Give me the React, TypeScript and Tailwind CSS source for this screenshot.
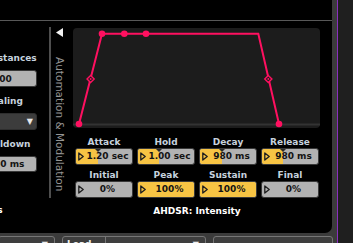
import React from 'react';

const font = { fontFamily: '"DejaVu Sans", Verdana, sans-serif' };

type Param = { label: string; value: string; fill: number };

const rows: Param[][] = [
  [
    { label: 'Attack', value: '1.20 sec', fill: 40 },
    { label: 'Hold', value: '1.00 sec', fill: 38 },
    { label: 'Decay', value: '980 ms', fill: 40 },
    { label: 'Release', value: '980 ms', fill: 38 },
  ],
  [
    { label: 'Initial', value: '0%', fill: 0 },
    { label: 'Peak', value: '100%', fill: 100 },
    { label: 'Sustain', value: '100%', fill: 100 },
    { label: 'Final', value: '0%', fill: 0 },
  ],
];

function PlayIcon() {
  return (
    <svg width="6" height="9" viewBox="0 0 6 9" className="shrink-0">
      <path d="M0.8 0.9 L5.2 4.5 L0.8 8.1 Z" fill="none" stroke="#1e1e1e" strokeWidth="1.3" strokeLinejoin="round" />
    </svg>
  );
}

function ValueBox({ p }: { p: Param }) {
  return (
    <div className="relative h-[17px] rounded-[3px] border border-[#383838] bg-[#b2b2b2] overflow-hidden">
      {p.fill > 0 && (
        <div className="absolute inset-y-0 left-0 bg-[#f7c444]" style={{ width: `${p.fill}%` }} />
      )}
      {p.fill > 0 && p.fill < 100 && (
        <div
          className="absolute top-0 w-0 h-0 border-x-[3px] border-x-transparent border-t-[3px] border-t-[#2a2a2a] -translate-x-1/2"
          style={{ left: `${p.fill}%` }}
        />
      )}
      <div className="relative flex items-center h-full pl-[2px] pr-[2px]">
        <PlayIcon />
        <span className="flex-1 text-center text-[9px] font-bold leading-none text-[#141414] pl-[1px]">{p.value}</span>
      </div>
    </div>
  );
}

function Envelope() {
  const c = '#ff1060';
  const dot = (x: number, y: number) => <circle cx={x} cy={y} r="3.3" fill={c} />;
  const diamond = (x: number, y: number) => (
    <g>
      <path d={`M${x} ${y - 3.6} L${x + 3.6} ${y} L${x} ${y + 3.6} L${x - 3.6} ${y} Z`} fill="#1c1c1c" stroke={c} strokeWidth="1.4" />
      <circle cx={x} cy={y} r="1" fill={c} />
    </g>
  );
  return (
    <svg width="247" height="100" viewBox="0 0 247 100">
      <line x1="0" y1="96.5" x2="247" y2="96.5" stroke="#333" strokeWidth="2" />
      <polyline
        points="6,96 29,5.7 185.3,5.7 206,96"
        fill="none"
        stroke={c}
        strokeWidth="2"
        strokeLinejoin="miter"
      />
      {dot(6, 96)}
      {diamond(17.6, 51)}
      {dot(29, 5.7)}
      {dot(51.3, 5.7)}
      {dot(73, 5.7)}
      {diamond(195.3, 51)}
      {dot(206, 96)}
    </svg>
  );
}

export default function App() {
  return (
    <div className="w-[353px] h-[243px] flex overflow-hidden bg-[#3b3b3b]" style={font}>
      <div className="w-[337px] shrink-0 flex flex-col">
        <div className="w-[332px] h-[233px] shrink-0 bg-black rounded-br-[7px] flex flex-col">
          <div className="h-[21px] shrink-0 border-b border-[#585858]" />
          <div className="flex flex-1">
            {/* left settings column (cut off) */}
            <div className="w-[49px] flex flex-col overflow-hidden text-[9px] font-bold leading-[12px]">
              <span className="mt-[31px] ml-[-12px] whitespace-nowrap text-[#c6d2de]">Instances</span>
              <div className="mt-[6px] ml-[-20px] w-[57px] h-[17px] shrink-0 rounded-[3px] border border-[#383838] bg-[#b2b2b2] flex items-center pl-[12px] text-[#141414]">
                100
              </div>
              <span className="mt-[8px] ml-[-14px] whitespace-nowrap text-[#c6d2de]">Scaling</span>
              <div className="mt-[6px] ml-[-20px] w-[57px] h-[17px] shrink-0 rounded-[3px] border border-[#2e2e2e] bg-[#3c3c3c] flex items-center justify-end pr-[3px]">
                <span className="text-[8px] text-[#e8e8e8]">▼</span>
              </div>
              <span className="mt-[8px] ml-[-19px] whitespace-nowrap text-[#c6d2de]">Cooldown</span>
              <div className="mt-[6px] ml-[-20px] w-[57px] h-[16px] shrink-0 rounded-[3px] border border-[#383838] bg-[#b2b2b2] flex items-center pl-[13px] text-[#141414]">
                50 ms
              </div>
              <span className="mt-[32px] ml-[-30px] whitespace-nowrap text-white">Voices</span>
            </div>

            <div className="w-[2px] mt-[6px] h-[171px] bg-[#4e4e4e]" />

            {/* vertical caption */}
            <div className="w-[22px] flex flex-col items-start pl-[5px]">
              <svg width="7" height="9" viewBox="0 0 7 9" className="mt-[7px] shrink-0">
                <path d="M7 0 L0 4.5 L7 9 Z" fill="#f2f2f2" />
              </svg>
              <span
                className="mt-[20px] ml-[-1px] text-[10.5px] leading-[9px] text-[#959595] whitespace-nowrap"
                style={{ writingMode: 'vertical-rl' }}
              >
                Automation &amp; Modulation
              </span>
            </div>

            {/* envelope editor */}
            <div className="w-[247px] flex flex-col">
              <div className="mt-[7px] h-[100px] shrink-0 rounded-[4px] bg-[#1c1c1c]">
                <Envelope />
              </div>
              <div className="mt-[8px] ml-[2px] w-[244px] flex flex-col gap-[4px]">
                {rows.map((row, i) => (
                  <div key={i} className="grid grid-cols-4 gap-x-[4px]">
                    {row.map((p) => (
                      <div key={p.label} className="flex flex-col">
                        <span className="text-center text-[9px] font-bold leading-[12px] text-[#c6d2de]">{p.label}</span>
                        <ValueBox p={p} />
                      </div>
                    ))}
                  </div>
                ))}
              </div>
              <div className="mt-[7px] ml-[2px] w-[244px] text-center text-[9px] font-bold leading-[12px] text-white">
                AHDSR: Intensity
              </div>
            </div>
          </div>
        </div>

        {/* bottom toolbar, mostly out of view */}
        <div className="flex mt-[3px] h-[20px] shrink-0">
          <div className="ml-[-2px] w-[57px] rounded-t-[3px] border border-[#767676] bg-[#3e3e3e] flex justify-end pr-[6px] pt-[4px]">
            <span className="text-[8px] leading-none text-[#f0f0f0]">▼</span>
          </div>
          <div className="ml-[7px] w-[144px] rounded-t-[3px] border border-[#767676] bg-[#3e3e3e] flex">
            <div className="w-[43px] border-r border-[#767676] pl-[4px] pt-[3px] text-[9px] font-bold leading-none text-[#f0f0f0]">
              Load
            </div>
            <div className="flex-1 flex justify-end pr-[6px] pt-[4px]">
              <span className="text-[8px] leading-none text-[#f0f0f0]">▼</span>
            </div>
          </div>
          <div className="ml-[7px] w-[120px] rounded-t-[3px] border border-[#767676] bg-[#3e3e3e]" />
        </div>
      </div>
      <div className="w-[1px] shrink-0 bg-[#8a2ec0]" />
      <div className="flex-1 bg-[#1f1f1f]" />
    </div>
  );
}
